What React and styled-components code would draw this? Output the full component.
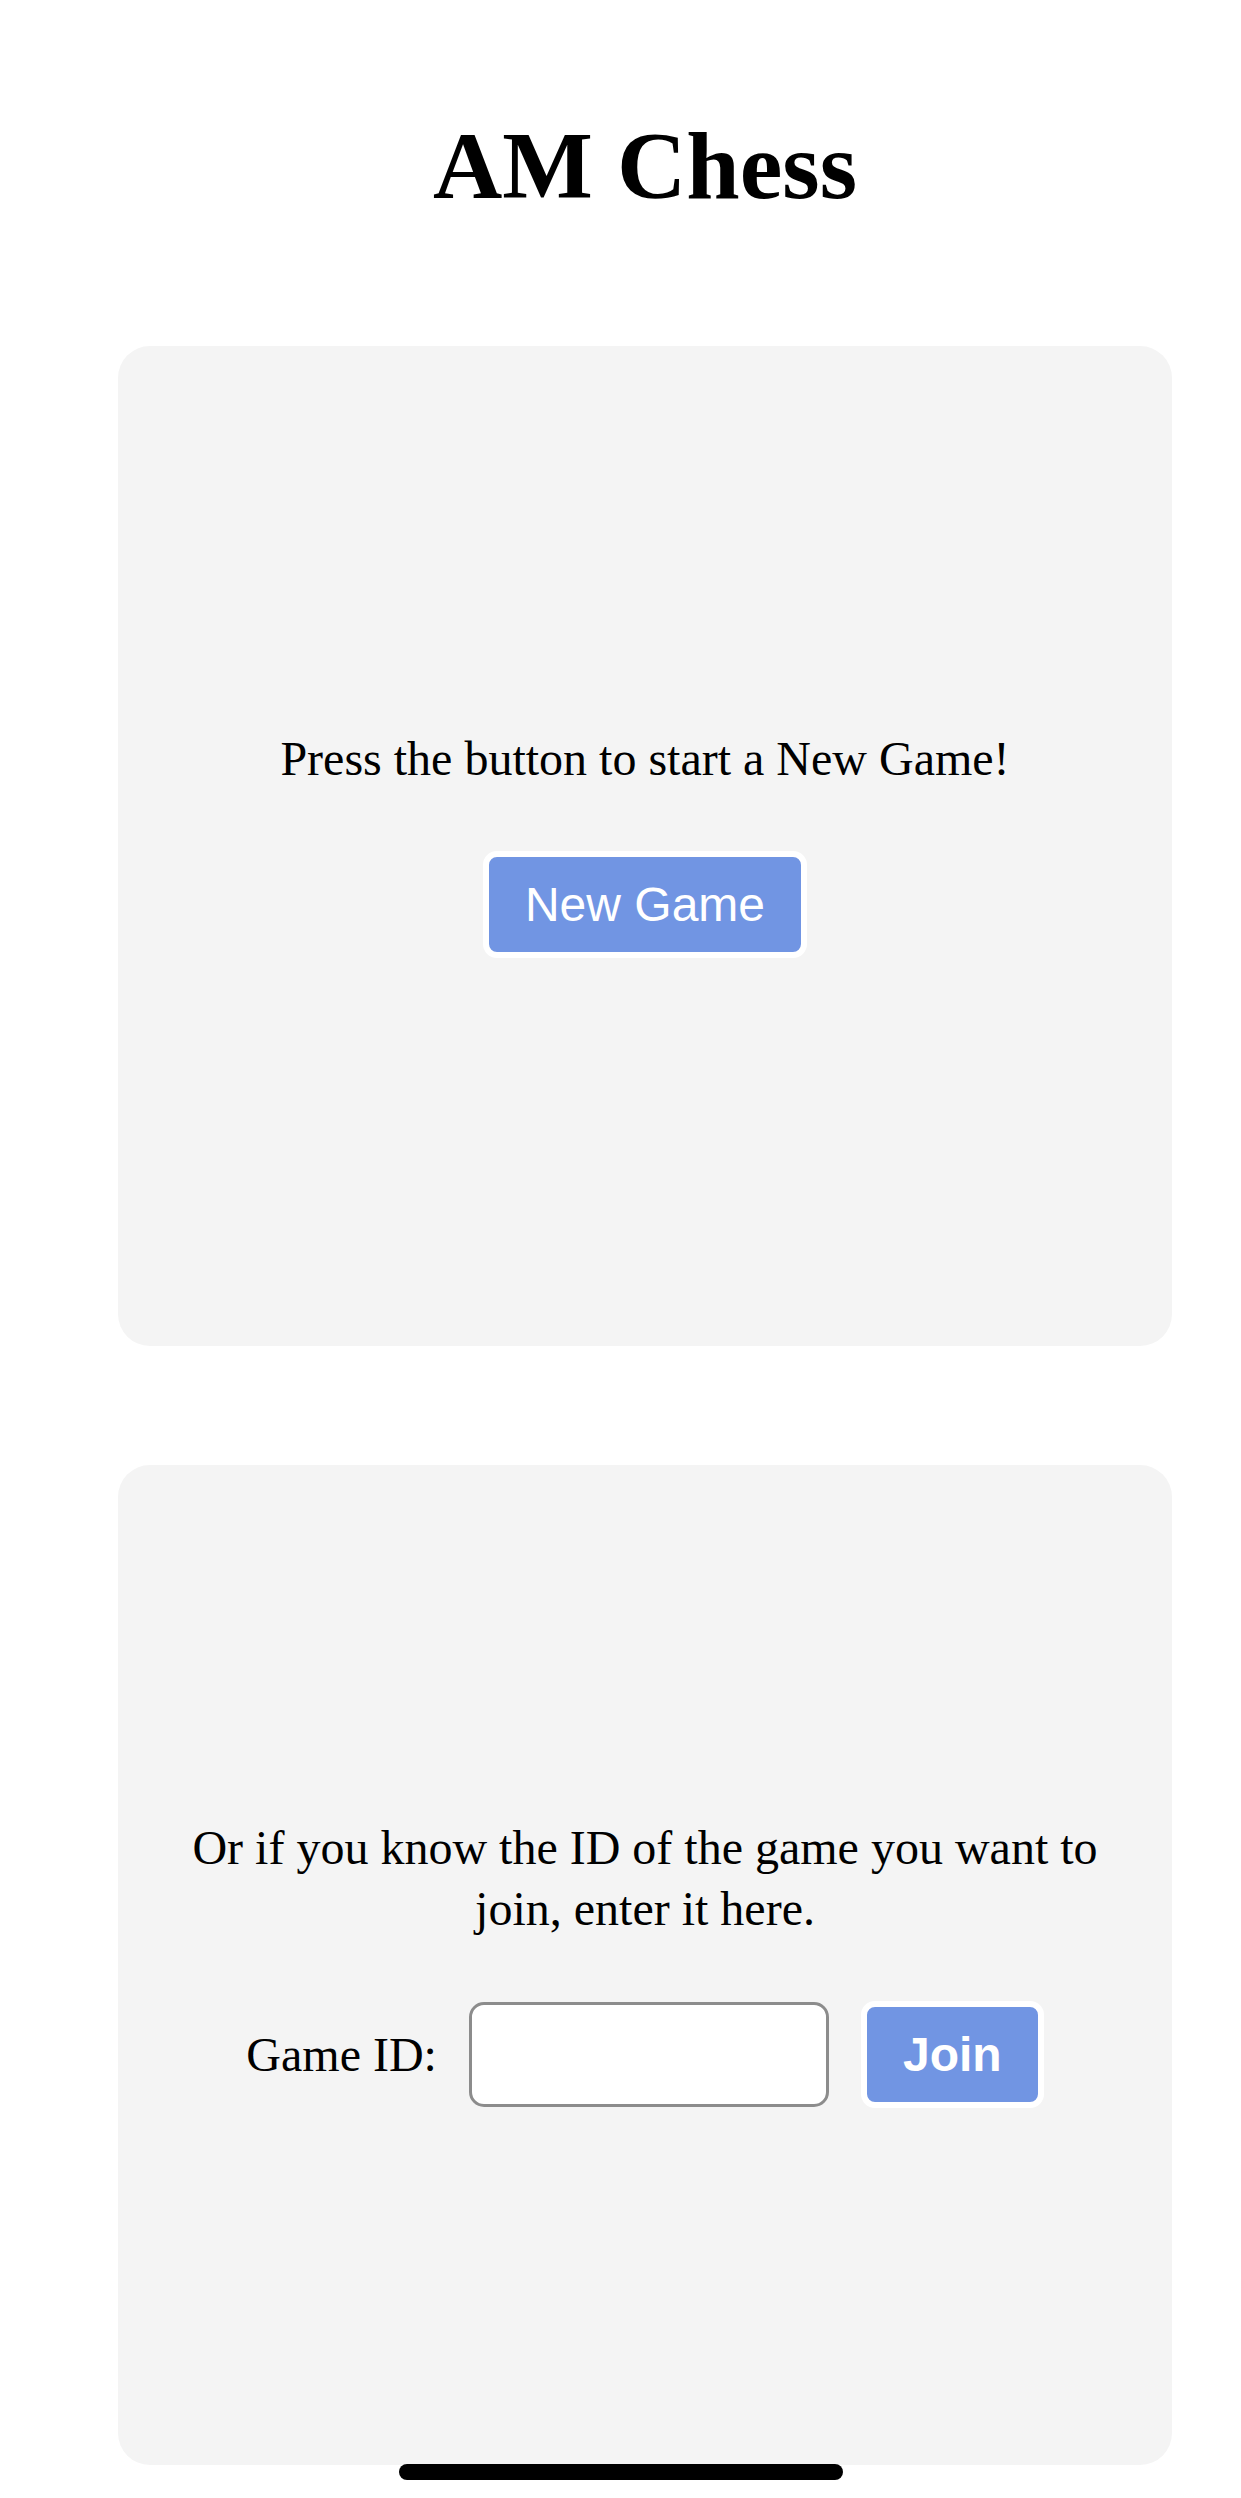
import React, { useState } from "react";
import styled, { createGlobalStyle } from "styled-components";

const GlobalStyle = createGlobalStyle`
  html, body {
    margin: 0;
    padding: 0;
    background: #ffffff;
    overflow-x: hidden;
  }
  body {
    font-family: "Liberation Serif", "Times New Roman", serif;
    color: #000;
  }
`;

// Estilos
const Page = styled.div`
  width: 1290px;
  padding-top: 111px;
  box-sizing: border-box;
`;

const Title = styled.h1`
  margin: 0;
  font-family: "Liberation Serif", "Times New Roman", serif;
  font-size: 96px;
  font-weight: 700;
  line-height: 110px;
  text-align: center;
`;

const Cards = styled.div`
  display: flex;
  flex-direction: column;
  gap: 119px;
  margin-top: 125px;
  padding: 0 118px;
`;

const Card = styled.section`
  height: 1000px;
  background: #f4f4f4;
  border-radius: 32px;
  padding: 0 60px 6px;
  box-sizing: border-box;
  display: flex;
  flex-direction: column;
  align-items: center;
  justify-content: center;
  gap: 62px;
`;

const Prompt = styled.p`
  margin: 0;
  font-size: 48px;
  line-height: 61px;
  text-align: center;
`;

const ActionButton = styled.button`
  font-family: "Liberation Sans", Arial, Helvetica, sans-serif;
  font-size: 48px;
  font-weight: ${(p) => (p.$bold ? 700 : 400)};
  line-height: 55px;
  color: #ffffff;
  background: #7195e3;
  border: 6px solid #ffffff;
  border-radius: 14px;
  padding: 20px 36px;
  cursor: pointer;
`;

const JoinRow = styled.div`
  display: flex;
  align-items: center;
  gap: 32px;
`;

const Label = styled.label`
  font-size: 48px;
  line-height: 61px;
`;

const IdInput = styled.input`
  width: 360px;
  height: 105px;
  box-sizing: border-box;
  border: 3px solid #8c8c8c;
  border-radius: 15px;
  background: #ffffff;
  font-size: 48px;
  padding: 0 16px;
  outline: none;
`;

const HomeIndicator = styled.div`
  position: fixed;
  left: 50%;
  bottom: 18px;
  transform: translateX(-50%);
  width: 444px;
  height: 16px;
  border-radius: 8px;
  background: #000000;
`;

export default function App() {
  const [gameId, setGameId] = useState("");

  return (
    <>
      <GlobalStyle />
      <Page>
        <Title>AM Chess</Title>
        <Cards>
          <Card>
            <Prompt>Press the button to start a New Game!</Prompt>
            <ActionButton>New Game</ActionButton>
          </Card>
          <Card>
            <Prompt>
              Or if you know the ID of the game you want to join, enter it here.
            </Prompt>
            <JoinRow>
              <Label htmlFor="game-id">Game ID:</Label>
              <IdInput
                id="game-id"
                value={gameId}
                onChange={(e) => setGameId(e.target.value)}
              />
              <ActionButton $bold>Join</ActionButton>
            </JoinRow>
          </Card>
        </Cards>
      </Page>
      <HomeIndicator />
    </>
  );
}
